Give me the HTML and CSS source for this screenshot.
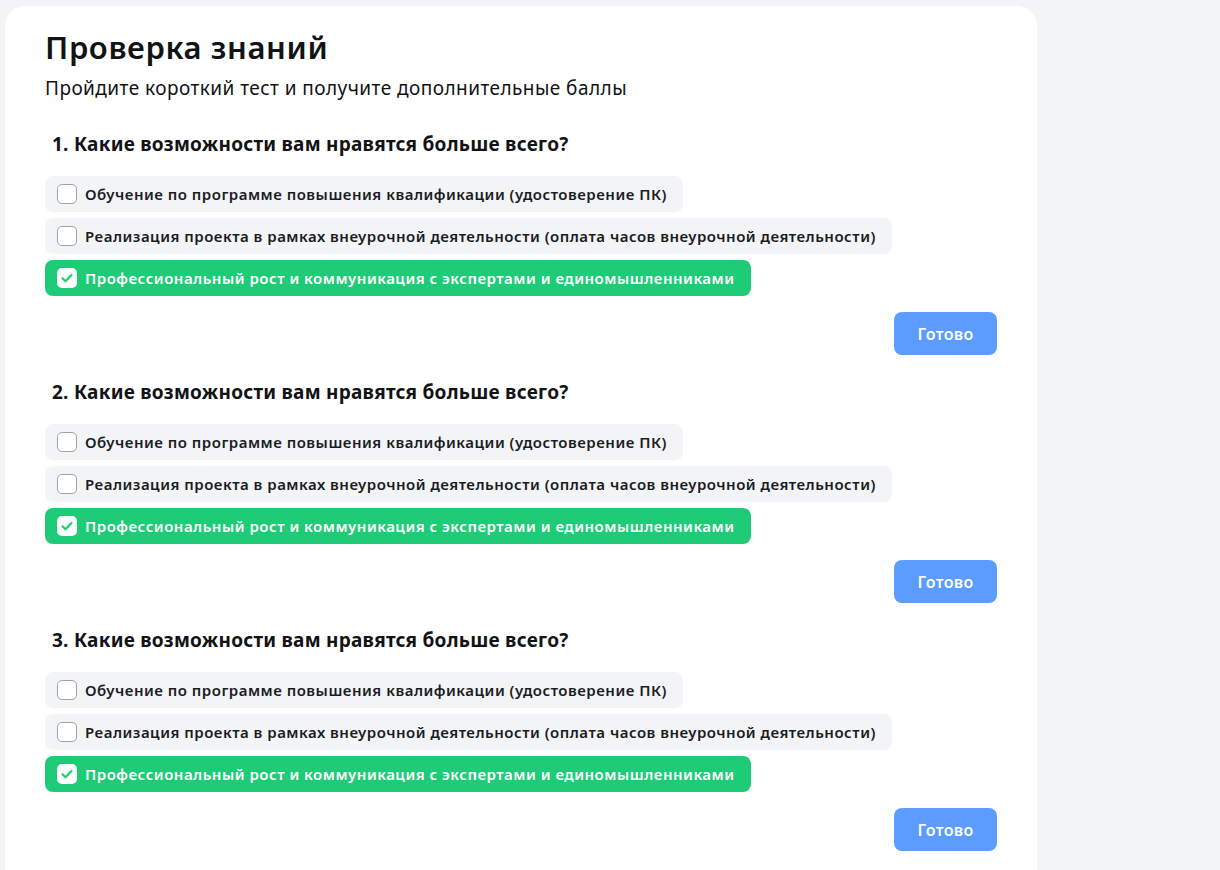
FILE: index.html
```html
<!DOCTYPE html>
<html lang="ru">
<head>
<meta charset="utf-8">
<title>Проверка знаний</title>
<link rel="stylesheet" href="styles.css">
</head>
<body>
<main class="card">
  <h1 class="title">Проверка знаний</h1>
  <p class="subtitle">Пройдите короткий тест и получите дополнительные баллы</p>

  <section class="question">
    <h2 class="q-title">1. Какие возможности вам нравятся больше всего?</h2>
    <div class="options">
      <label class="option"><span class="box"></span><span>Обучение по программе повышения квалификации (удостоверение ПК)</span></label>
      <label class="option"><span class="box"></span><span>Реализация проекта в рамках внеурочной деятельности (оплата часов внеурочной деятельности)</span></label>
      <label class="option checked"><span class="box"><svg viewBox="0 0 20 20" width="20" height="20"><path d="M5.5 10.3l3 3 6-6.3" fill="none" stroke="#1ecb76" stroke-width="2.2" stroke-linecap="round" stroke-linejoin="round"/></svg></span><span>Профессиональный рост и коммуникация с экспертами и единомышленниками</span></label>
    </div>
    <div class="actions"><button class="btn">Готово</button></div>
  </section>

  <section class="question">
    <h2 class="q-title">2. Какие возможности вам нравятся больше всего?</h2>
    <div class="options">
      <label class="option"><span class="box"></span><span>Обучение по программе повышения квалификации (удостоверение ПК)</span></label>
      <label class="option"><span class="box"></span><span>Реализация проекта в рамках внеурочной деятельности (оплата часов внеурочной деятельности)</span></label>
      <label class="option checked"><span class="box"><svg viewBox="0 0 20 20" width="20" height="20"><path d="M5.5 10.3l3 3 6-6.3" fill="none" stroke="#1ecb76" stroke-width="2.2" stroke-linecap="round" stroke-linejoin="round"/></svg></span><span>Профессиональный рост и коммуникация с экспертами и единомышленниками</span></label>
    </div>
    <div class="actions"><button class="btn">Готово</button></div>
  </section>

  <section class="question">
    <h2 class="q-title">3. Какие возможности вам нравятся больше всего?</h2>
    <div class="options">
      <label class="option"><span class="box"></span><span>Обучение по программе повышения квалификации (удостоверение ПК)</span></label>
      <label class="option"><span class="box"></span><span>Реализация проекта в рамках внеурочной деятельности (оплата часов внеурочной деятельности)</span></label>
      <label class="option checked"><span class="box"><svg viewBox="0 0 20 20" width="20" height="20"><path d="M5.5 10.3l3 3 6-6.3" fill="none" stroke="#1ecb76" stroke-width="2.2" stroke-linecap="round" stroke-linejoin="round"/></svg></span><span>Профессиональный рост и коммуникация с экспертами и единомышленниками</span></label>
    </div>
    <div class="actions"><button class="btn">Готово</button></div>
  </section>
</main>
</body>
</html>
```

FILE: styles.css
```css
* { box-sizing: border-box; }

html, body {
  margin: 0;
  padding: 0;
  background: #f3f4f6;
}

body {
  font-family: "Noto Sans", "Open Sans", sans-serif;
  color: #111315;
  padding: 6px 0 0 5px;
}

.card {
  width: 1032px;
  background: #ffffff;
  border-radius: 20px;
  padding: 23px 40px 40px;
}

.title {
  margin: 0;
  font-size: 31px;
  line-height: 36px;
  font-weight: 600;
  letter-spacing: 0.6px;
}

.subtitle {
  margin: 11px 0 0;
  font-size: 19px;
  line-height: 24px;
  font-weight: 400;
  letter-spacing: 0.45px;
}

.question {
  display: flex;
  flex-direction: column;
}

.q-title {
  margin: 30px 0 18px;
  padding-left: 7px;
  font-size: 19px;
  line-height: 28px;
  font-weight: 700;
  letter-spacing: 0.25px;
}

.question + .question .q-title { margin-top: 23px; }

.options {
  display: flex;
  flex-direction: column;
  align-items: flex-start;
  gap: 6px;
}

.option {
  display: flex;
  align-items: center;
  gap: 8px;
  height: 36px;
  padding: 0 16px 0 12px;
  background: #f2f4f6;
  border-radius: 8px;
  font-size: 15px;
  font-weight: 600;
  letter-spacing: 0.5px;
  color: #1a1c1f;
  cursor: pointer;
}

.box {
  width: 20px;
  height: 20px;
  flex: none;
  border-radius: 5px;
  border: 1.5px solid #9ea3a9;
  background: #ffffff;
  display: flex;
}

.option.checked {
  background: #1ecb76;
  color: #ffffff;
}

.option.checked .box {
  border: none;
}

.actions {
  display: flex;
  justify-content: flex-end;
  margin-top: 16px;
}

.btn {
  width: 103px;
  height: 43px;
  border: none;
  border-radius: 8px;
  background: #5b9cff;
  color: #ffffff;
  font-family: inherit;
  font-size: 16px;
  font-weight: 600;
  letter-spacing: 0.3px;
  cursor: pointer;
}
```
